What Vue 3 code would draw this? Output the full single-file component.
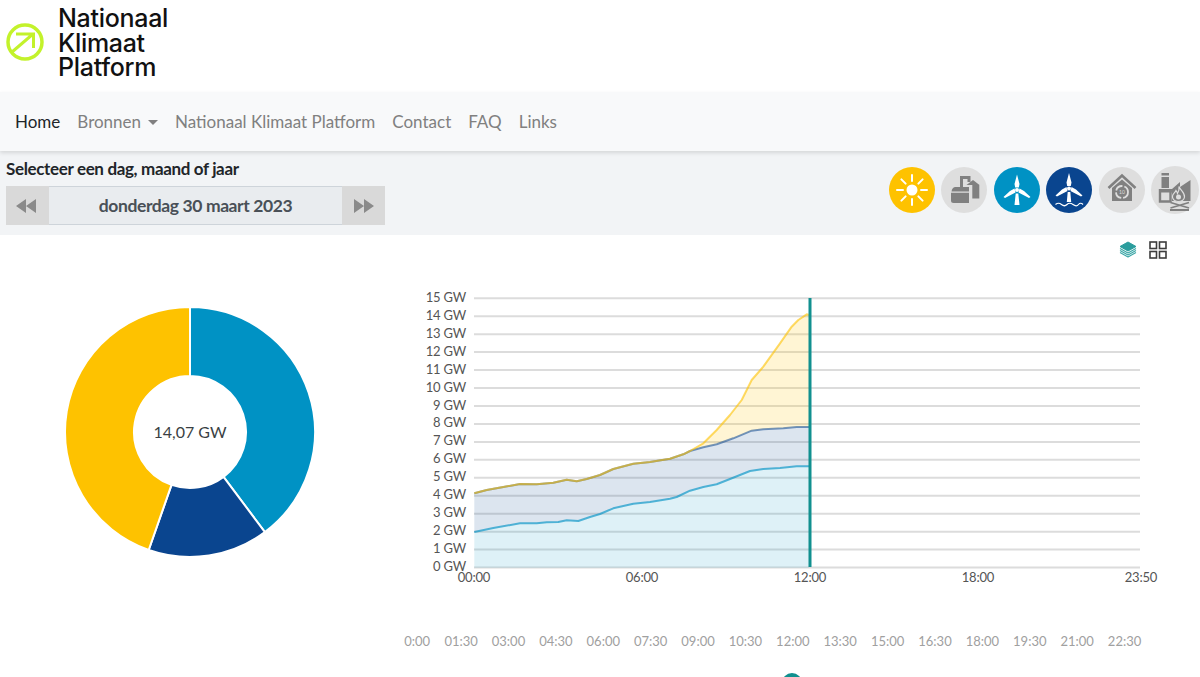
<script setup>
const zx = (v) => +(30 + v / 3).toFixed(1)
const zy = (v) => +(v / 3).toFixed(1)
const sharedTop = [[133,625],[170,615],[220,606],[270,597],[320,598],[370,593],[410,584],[440,589],[470,582],[510,570],[550,552],[610,536],[660,531],[720,521],[760,508],[780,498]]
const topCurve = [...sharedTop,[820,475],[860,435],[900,390],[935,345],[965,285],[1000,245],[1050,175],[1085,125],[1105,105],[1130,88],[1137,90]]
const midCurve = [...sharedTop,[820,487],[860,478],[910,460],[965,437],[1000,433],[1060,430],[1100,426],[1137,426]]
const lowCurve = [[133,741],[190,729],[270,715],[320,715],[350,712],[385,711],[410,706],[445,708],[480,696],[510,687],[550,670],[610,656],[660,651],[720,641],[740,636],[780,617],[820,606],[860,598],[900,582],[960,558],[1000,552],[1050,549],[1100,544],[1137,544]]
const pts = (c) => c.map(([x, y]) => `${zx(x)},${zy(y)}`).join(' ')
const area = (up, down) => pts(up) + ' ' + pts([...down].reverse())
const base = [[133, 848], [1137, 848]]
const grid = Array.from({ length: 16 }, (_, i) => {
  const gw = 15 - i
  return { gw, y: +(13.3 + i * 17.95).toFixed(1) }
})
const xLabels = [['00:00', 74], ['06:00', 242], ['12:00', 410], ['18:00', 578], ['23:50', 741]]
const ticks = ['0:00','01:30','03:00','04:30','06:00','07:30','09:00','10:30','12:00','13:30','15:00','16:30','18:00','19:30','21:00','22:30']
const nav = ['Nationaal Klimaat Platform', 'Contact', 'FAQ', 'Links']
const brandLines = ['Nationaal', 'Klimaat', 'Platform']
const polar = (r, deg) => {
  const a = (deg * Math.PI) / 180
  return `${(125 + r * Math.sin(a)).toFixed(2)} ${(125 - r * Math.cos(a)).toFixed(2)}`
}
const seg = (a, b) => {
  const R = 125, r = 56, large = b - a > 180 ? 1 : 0
  return `M${polar(R, a)}A${R} ${R} 0 ${large} 1 ${polar(R, b)}L${polar(r, b)}A${r} ${r} 0 ${large} 0 ${polar(r, a)}Z`
}
const slices = [
  { d: seg(0, 143.2), c: '#0092c4' },
  { d: seg(143.2, 199.3), c: '#0a458f' },
  { d: seg(199.3, 360), c: '#fec200' }
]
const rays = [0, 45, 90, 135, 180, 225, 270, 315]
</script>

<template>
  <div class="page">
    <header class="brand">
      <svg class="mark" width="40" height="40" viewBox="0 0 40 40" fill="none" stroke="#c3f22b" stroke-width="3.5">
        <circle cx="20" cy="20" r="17" />
        <path d="M7 30 28 12M11 12H28.500V26" stroke-width="3" />
      </svg>
      <div class="brand-name">
        <div v-for="l in brandLines" :key="l" class="brand-line">{{ l }}</div>
      </div>
    </header>

    <nav class="nav">
      <a class="link active">Home</a>
      <a class="link">Bronnen<span class="caret"></span></a>
      <a v-for="n in nav" :key="n" class="link">{{ n }}</a>
    </nav>

    <section class="select">
      <div class="picker">
        <div class="picker-title">Selecteer een dag, maand of jaar</div>
        <div class="date">
          <button class="step">
            <svg class="back" width="20" height="14" viewBox="0 0 20 14" fill="#8a8a8a"><path d="M10 0V14L0 7ZM20 0V14L10 7Z" /></svg>
          </button>
          <div class="date-value">donderdag 30 maart 2023</div>
          <button class="step">
            <svg width="20" height="14" viewBox="0 0 20 14" fill="#8a8a8a"><path d="M0 0V14L10 7ZM10 0V14L20 7Z" /></svg>
          </button>
        </div>
      </div>
      <div class="sources">
        <svg class="src" width="46" height="46" viewBox="0 0 46 46">
          <circle cx="23" cy="23" r="23" fill="#fec200" />
          <circle cx="23" cy="23" r="5.500" fill="#fff" />
          <line v-for="r in rays" :key="r" x1="23" y1="14" x2="23" y2="8" stroke="#fff" stroke-width="2" stroke-linecap="round" :transform="`rotate(${r} 23 23)`" />
        </svg>
        <svg class="src" width="46" height="46" viewBox="0 0 46 46">
          <circle cx="23" cy="23" r="23" fill="#dedede" />
          <path d="M20.500 20V10.500H28V15" fill="none" stroke="#808080" stroke-width="3" />
          <path d="M25.500 18 32 13 38.500 18Z" fill="#808080" />
          <rect x="31.300" y="18" width="7" height="13.500" fill="#808080" />
          <path d="M14 20H28V24.500H10.500Q11 20.500 14 20ZM10 25.800H28V36H12.500Q10 36 10 33.500Z" fill="#808080" />
        </svg>
        <svg class="src" width="46" height="46" viewBox="0 0 46 46">
          <circle cx="23" cy="23" r="23" fill="#0092c4" />
          <path d="M23 7.500 25.500 17 24.800 20.500H21.200L20.500 17ZM20.500 21.500 16 24 9.500 30 11 31 21.500 25.500ZM25.500 21.500 30 24 36.500 30 35 31 24.500 25.500ZM21.700 26.500H24.300L25.500 38H20.500Z" fill="#fff" />
          <circle cx="23" cy="23" r="2" fill="#fff" />
        </svg>
        <svg class="src" width="46" height="46" viewBox="0 0 46 46">
          <circle cx="23" cy="23" r="23" fill="#0a458f" />
          <path d="M23 6 25.500 15.500 24.800 19H21.200L20.500 15.500ZM20.500 20 16 22.500 9.500 28.500 11 29.500 21.500 24ZM25.500 20 30 22.500 36.500 28.500 35 29.500 24.500 24ZM21.700 25H24.300L25.200 35H20.800Z" fill="#fff" />
          <circle cx="23" cy="21.500" r="2" fill="#fff" />
          <path d="M9.500 37.500Q12.500 35 15.500 37.500T21 37.500T27 37.500T32.500 37.500T37 37.500" fill="none" stroke="#fff" stroke-width="1.200" />
        </svg>
        <svg class="src" width="46" height="46" viewBox="0 0 46 46">
          <circle cx="23" cy="23" r="23" fill="#dedede" />
          <path d="M9.500 21 23 8.500 36.500 21" fill="none" stroke="#808080" stroke-width="2.600" />
          <path d="M13 21 23 12.500 33 21V34H13Z" fill="#808080" />
          <circle cx="23" cy="25" r="6" fill="none" stroke="#dedede" stroke-width="1.800" stroke-dasharray="8 2" />
          <text x="23" y="27" text-anchor="middle" class="tiny">10</text>
        </svg>
        <svg class="src" width="48" height="48" viewBox="0 0 48 48">
          <circle cx="24" cy="24" r="24" fill="#dedede" />
          <path d="M10.500 7H18V9.500H10.500ZM10.500 11H18V22H10.500Z" fill="#808080" />
          <path d="M9 24.200H19.500V35.500H9Z" fill="none" stroke="#808080" stroke-width="2.400" />
          <rect x="8" y="23" width="13" height="3.500" fill="#808080" />
          <path d="M21 35V23L29 16V21L39.500 14V35Z" fill="#808080" />
          <path d="M28 20.500C30 25 34 27 33.500 31C33 34.500 30 35.500 27 35.500C23.500 35.500 21 33 21.500 30C22 27 24 27 25 24.500C26 26 26.500 27 26.500 27.500C27.500 26 28.500 24 28 20.500Z" fill="#808080" stroke="#dedede" stroke-width="1.200" />
          <circle cx="27.500" cy="31" r="2.500" fill="#dedede" />
          <path d="M19.500 36.500 38 42M19.500 42 38 36.500M19 44H38" stroke="#808080" stroke-width="1.800" fill="none" />
        </svg>
      </div>
    </section>

    <div class="tools">
      <svg width="18" height="17" viewBox="0 0 18 17" fill="none" stroke-linejoin="round">
        <path d="M9 1 17 5.500 9 10 1 5.500Z" fill="#2a9d9d" stroke="#2a9d9d" />
        <path d="M1 7.500 9 12 17 7.500M1 9.500 9 14 17 9.500M1 11.500 9 16 17 11.500" stroke="#3aa6a6" stroke-width="1.100" />
      </svg>
      <svg width="18" height="18" viewBox="0 0 18 18" fill="none" stroke="#3d3d3d" stroke-width="1.600">
        <rect x="1" y="1" width="6.500" height="6.500" />
        <rect x="10.500" y="1" width="6.500" height="6.500" />
        <rect x="1" y="10.500" width="6.500" height="6.500" />
        <rect x="10.500" y="10.500" width="6.500" height="6.500" />
      </svg>
    </div>

    <main class="charts">
      <div class="donut">
        <svg width="250" height="250" viewBox="0 0 250 250">
          <path v-for="s in slices" :key="s.c" :d="s.d" :fill="s.c" stroke="#fff" stroke-width="2" />
          <text x="125" y="131" text-anchor="middle" class="total">14,07 GW</text>
        </svg>
      </div>
      <div class="area">
        <svg width="800" height="305" viewBox="0 0 800 305" stroke-linejoin="round">
          <g v-for="g in grid" :key="g.gw">
            <line x1="74" x2="740" :y1="g.y" :y2="g.y" stroke="#dcdcdc" stroke-width="2" />
            <text x="66" :y="g.y + 3.500" text-anchor="end" class="gw">{{ g.gw }} GW</text>
          </g>
          <polygon :points="area(topCurve, midCurve)" fill="#fec200" fill-opacity=".17" />
          <polygon :points="area(midCurve, lowCurve)" fill="#0a458f" fill-opacity=".14" />
          <polygon :points="area(lowCurve, base)" fill="#0092c4" fill-opacity=".13" />
          <polyline :points="pts(lowCurve)" fill="none" stroke="#0092c4" stroke-opacity=".65" stroke-width="2" />
          <polyline :points="pts(midCurve)" fill="none" stroke="#0a458f" stroke-opacity=".55" stroke-width="2" />
          <polyline :points="pts(topCurve)" fill="none" stroke="#fec200" stroke-opacity=".6" stroke-width="2" />
          <line x1="410" x2="410" y1="13" y2="282" stroke="#11908f" stroke-width="3" />
          <text v-for="l in xLabels" :key="l[0]" :x="l[1]" y="297" text-anchor="middle" class="gw">{{ l[0] }}</text>
        </svg>
      </div>
    </main>

    <div class="slider">
      <span v-for="t in ticks" :key="t" class="tick">{{ t }}</span>
    </div>
    <div class="handle"></div>
  </div>
</template>

<style scoped>
.page {
  height: 677px;
  width: 1200px;
  overflow: hidden;
  background: #fff;
  font-family: Lato, "Liberation Sans", sans-serif;
}
.brand {
  height: 92px;
  display: flex;
  box-sizing: border-box;
  padding: 6px 0 0 5px;
  gap: 13px;
}
.mark {
  margin-top: 16px;
}
.brand-name {
  font-family: Inter, "Liberation Sans", sans-serif;
  font-weight: 500;
  font-size: 25px;
  letter-spacing: -0.3px;
  color: #111;
}
.brand-line {
  height: 24.500px;
  line-height: 24.500px;
}
.nav {
  position: relative;
  height: 59px;
  display: flex;
  align-items: center;
  padding-left: 6.500px;
  background: #f8f9fa;
  box-shadow: 0 2px 4px rgba(0, 0, 0, 0.12);
  font-size: 17px;
}
.link {
  padding: 0 8.500px;
  color: #808080;
  white-space: nowrap;
}
.link.active {
  color: #212529;
}
.caret {
  display: inline-block;
  margin-left: 7px;
  vertical-align: 3px;
  border-top: 5px solid #808080;
  border-left: 5px solid transparent;
  border-right: 5px solid transparent;
}
.select {
  height: 84px;
  box-sizing: border-box;
  display: flex;
  justify-content: space-between;
  padding: 8px 2px 0 6px;
  background: #f2f4f6;
}
.picker-title {
  font-size: 17px;
  font-weight: 700;
  line-height: 20px;
  color: #212529;
  letter-spacing: -0.35px;
}
.date {
  margin-top: 7px;
  display: flex;
  width: 379px;
  height: 39px;
}
.step {
  width: 43px;
  border: 0;
  padding: 0;
  background: #d9d9d9;
  display: flex;
  align-items: center;
  justify-content: center;
}
.back {
  margin-right: 3px;
}
.date-value {
  flex: 1;
  display: flex;
  align-items: center;
  justify-content: center;
  background: #e9ecef;
  border: 1px solid #ced4da;
  border-width: 1px 0;
  font-size: 17.500px;
  font-weight: 700;
  letter-spacing: -0.4px;
  color: #495057;
}
.sources {
  display: flex;
  align-items: center;
  gap: 6.400px;
  height: 62px;
  margin-right: -1px;
}
.src {
  flex: none;
}
.tools {
  height: 50px;
  box-sizing: border-box;
  padding: 6px 33px 0 0;
  display: flex;
  justify-content: flex-end;
  gap: 12px;
}
.charts {
  display: flex;
  height: 305px;
}
.donut {
  width: 400px;
  padding: 22px 0 0 65px;
  box-sizing: border-box;
}
.area svg {
  display: block;
}
.total {
  font-size: 16px;
  fill: #3a3f44;
}
.tiny {
  font-size: 5px;
  fill: #dedede;
}
.gw {
  font-size: 13px;
  letter-spacing: -0.2px;
  fill: #555;
}
.slider {
  display: flex;
  margin-top: 42px;
  padding-left: 390px;
  font-size: 13px;
  line-height: 18px;
  color: #a0a0a0;
}
.tick {
  width: 47.400px;
  flex: none;
  text-align: center;
}
.tick:first-child {
  padding-left: 7px;
  box-sizing: border-box;
}
.handle {
  width: 20px;
  height: 20px;
  border-radius: 50%;
  background: #11908f;
  margin: 23px 0 0 782px;
}
</style>
